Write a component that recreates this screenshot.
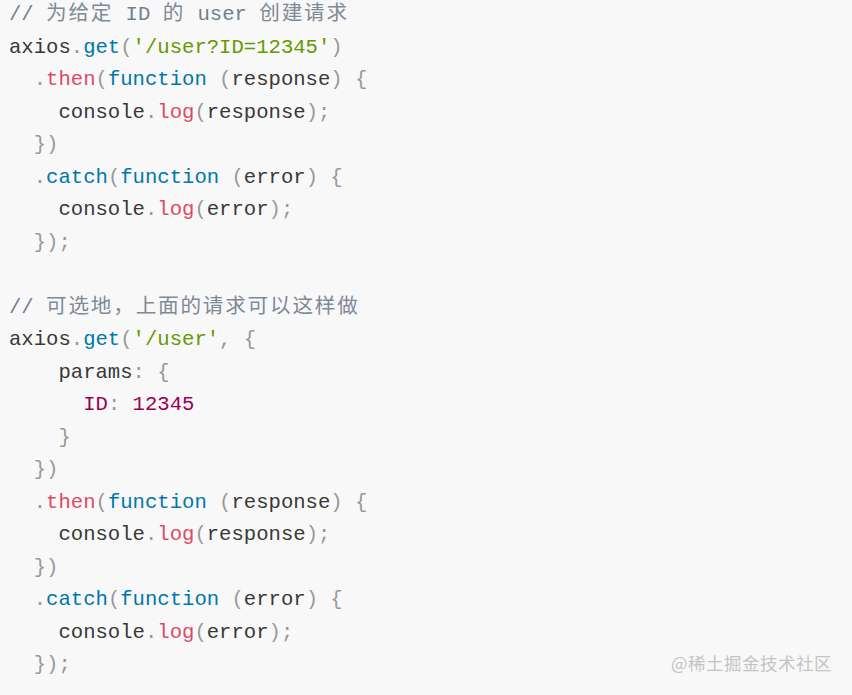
import React from 'react';

type Tok = [string, string];

const P = 'text-[#999999]';
const T = 'text-[#383838]';
const C = 'text-[#708090]';
const Z = 'text-[#7f8a96] tracking-[1.8px]';
const B = 'text-[#0077aa]';
const R = 'text-[#dd4a68]';
const G = 'text-[#669900]';
const V = 'text-[#990055]';

const lines: Tok[][] = [
  [['// ', C], ['为给定', Z], [' ID ', C], ['的', Z], [' user ', C], ['创建请求', Z]],
  [['axios', T], ['.', P], ['get', B], ['(', P], ["'/user?ID=12345'", G], [')', P]],
  [['  ', T], ['.', P], ['then', R], ['(', P], ['function', B], [' (', P], ['response', T], [')', P], [' {', P]],
  [['    console', T], ['.', P], ['log', R], ['(', P], ['response', T], [')', P], [';', P]],
  [['  })', P]],
  [['  ', T], ['.', P], ['catch', B], ['(', P], ['function', B], [' (', P], ['error', T], [')', P], [' {', P]],
  [['    console', T], ['.', P], ['log', R], ['(', P], ['error', T], [')', P], [';', P]],
  [['  });', P]],
  [],
  [['// ', C], ['可选地，上面的请求可以这样做', Z]],
  [['axios', T], ['.', P], ['get', B], ['(', P], ["'/user'", G], [', {', P]],
  [['    params', T], [': {', P]],
  [['      ID', V], [':', P], [' 12345', V]],
  [['    }', P]],
  [['  })', P]],
  [['  ', T], ['.', P], ['then', R], ['(', P], ['function', B], [' (', P], ['response', T], [')', P], [' {', P]],
  [['    console', T], ['.', P], ['log', R], ['(', P], ['response', T], [')', P], [';', P]],
  [['  })', P]],
  [['  ', T], ['.', P], ['catch', B], ['(', P], ['function', B], [' (', P], ['error', T], [')', P], [' {', P]],
  [['    console', T], ['.', P], ['log', R], ['(', P], ['error', T], [')', P], [';', P]],
  [['  });', P]],
];

export default function App() {
  return (
    <div className="relative h-[695px] w-[852px] overflow-hidden bg-[#f8f8f8]">
      <pre
        className="-mt-[1px] pl-[9px] text-[20.6px] leading-[32.5px] whitespace-pre"
        style={{ fontFamily: '"Liberation Mono", "Noto Sans CJK SC", monospace' }}
      >
        {lines.map((line, i) => (
          <div key={i} className="h-[32.5px]">
            {line.map(([text, cls], j) => (
              <span key={j} className={cls}>
                {text}
              </span>
            ))}
          </div>
        ))}
      </pre>
      {/* watermark */}
      <div
        className="absolute right-[20px] bottom-[19px] text-[17.5px] tracking-[0.5px] text-[#c4c4c4]"
        style={{ fontFamily: '"Noto Sans CJK SC", sans-serif' }}
      >
        @稀土掘金技术社区
      </div>
    </div>
  );
}
